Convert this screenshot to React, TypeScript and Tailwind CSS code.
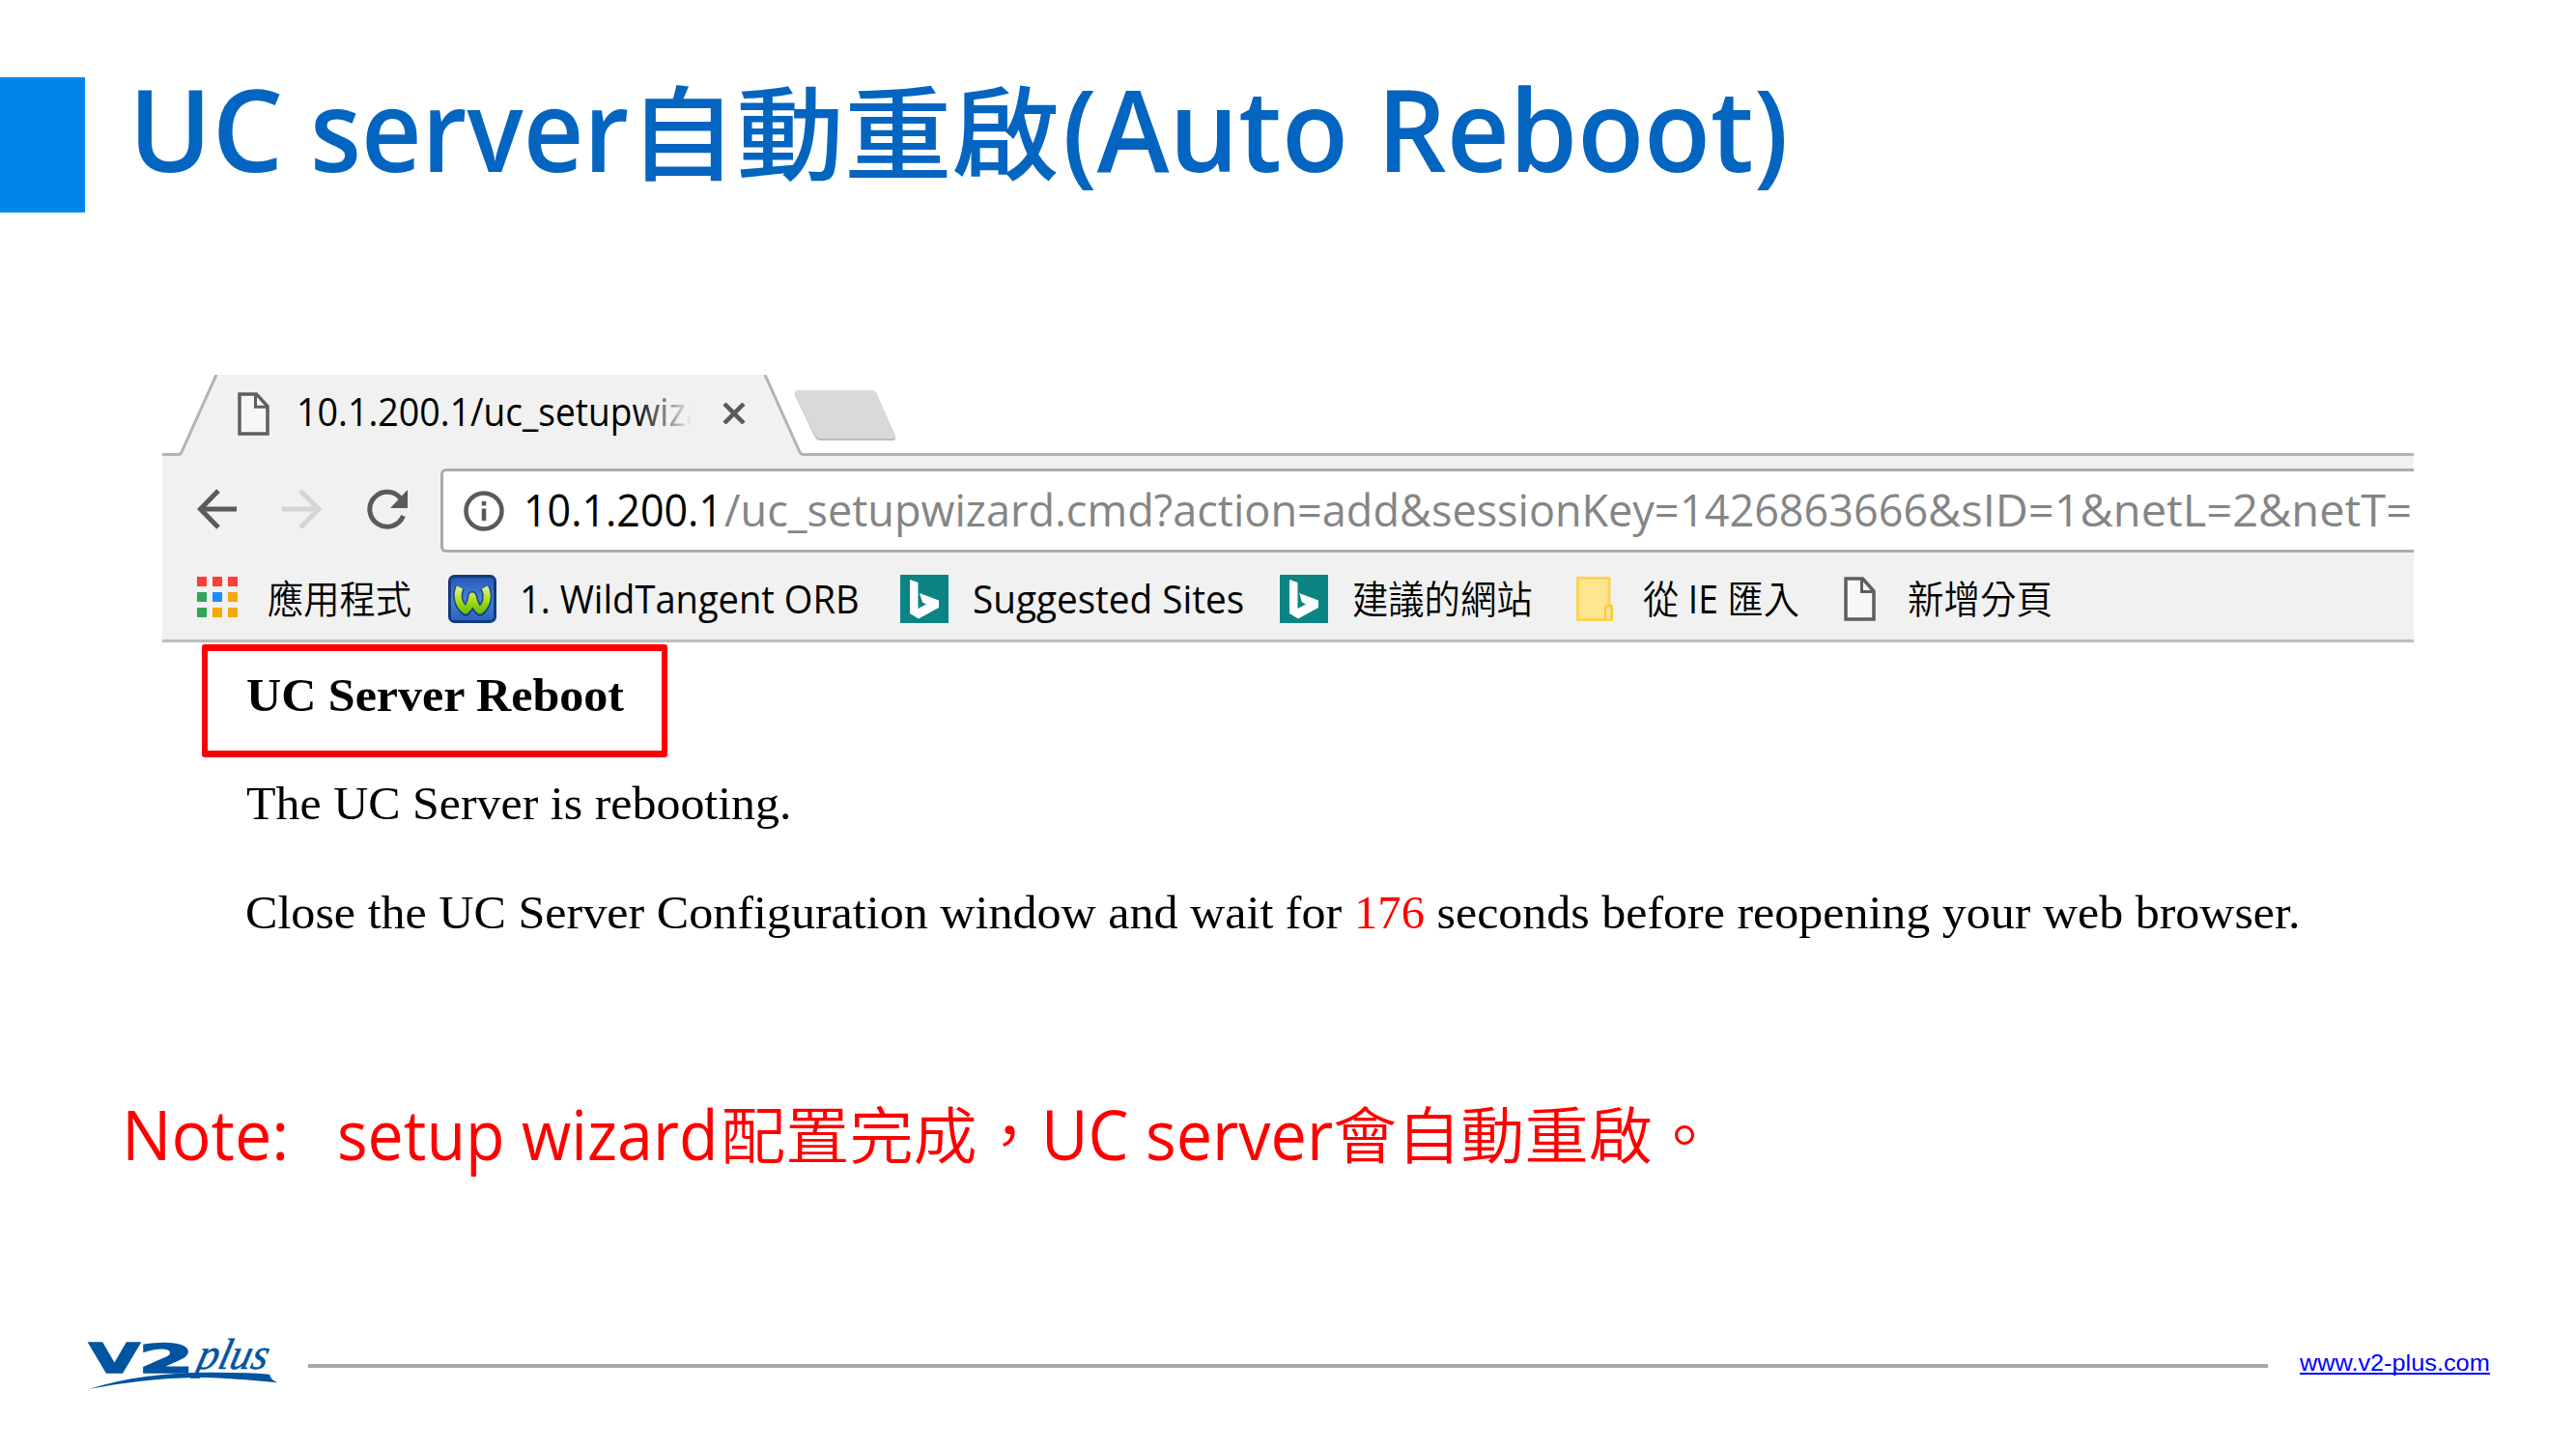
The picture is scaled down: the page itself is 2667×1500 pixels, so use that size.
import { useLayoutEffect, useRef, type ReactNode } from "react";

/** Stretches a single line of text horizontally so it fills its box. */
function Fit({ className, children }: { className: string; children: ReactNode }) {
  const box = useRef<HTMLSpanElement>(null);
  const text = useRef<HTMLSpanElement>(null);
  useLayoutEffect(() => {
    if (!box.current || !text.current) return;
    const ratio = box.current.clientWidth / text.current.offsetWidth;
    text.current.style.transform = `scaleX(${ratio})`;
  }, []);
  return (
    <span ref={box} className={`block shrink-0 ${className}`}>
      <span ref={text} className="inline-block origin-left whitespace-pre">
        {children}
      </span>
    </span>
  );
}

const UI = "font-['Open_Sans','Noto_Sans_CJK_TC',sans-serif]";

function PageIcon({ className }: { className: string }) {
  return (
    <svg viewBox="0 0 33 46" preserveAspectRatio="none" fill="none" className={`block shrink-0 ${className}`}>
      <path d="M2 2H19.500L31 15V44H2Z" fill="#f7f7f7" stroke="#5f5f5f" strokeWidth="3.500" />
      <path d="M18.500 2V15.500H31" stroke="#5f5f5f" strokeWidth="3" />
    </svg>
  );
}

function BingIcon({ className }: { className: string }) {
  return (
    <svg viewBox="0 0 50 50" className={`block h-[50px] w-[50px] shrink-0 ${className}`}>
      <rect width="50" height="50" fill="#0c8484" />
      <path d="M10 5L18.500 8V35L27 30.500L23 28.500L20 19L40 26.500V34L19 45.500L10 40Z" fill="#fff" />
    </svg>
  );
}

function AppsIcon() {
  const colors = [
    "bg-[#fb3f38]", "bg-[#fb3f38]", "bg-[#fb3f38]",
    "bg-[#34a45c]", "bg-[#1a8cff]", "bg-[#f8a806]",
    "bg-[#34a45c]", "bg-[#f8a806]", "bg-[#f8a806]",
  ];
  return (
    <div className="ml-9 mt-[2px] grid h-[42px] w-[42px] shrink-0 grid-cols-3 gap-[6px]">
      {colors.map((c, i) => (
        <div key={i} className={c} />
      ))}
    </div>
  );
}

function OrbIcon() {
  return (
    <svg viewBox="0 0 50 50" className="ml-[38px] block h-[50px] w-[50px] shrink-0">
      <defs>
        <linearGradient id="orb" x1="0" y1="0" x2="0" y2="1">
          <stop offset="0" stopColor="#2456b0" />
          <stop offset="0.5" stopColor="#4383dc" />
          <stop offset="1" stopColor="#2a62bd" />
        </linearGradient>
        <linearGradient id="leaf" x1="0" y1="0" x2="0" y2="1">
          <stop offset="0" stopColor="#d9ee9a" />
          <stop offset="0.5" stopColor="#b4e020" />
          <stop offset="1" stopColor="#74c400" />
        </linearGradient>
      </defs>
      <rect x="1.500" y="1.500" width="47" height="47" rx="5" fill="url(#orb)" stroke="#14397f" strokeWidth="3" />
      <path
        d="M12 13C8 22 11 32 18 38C22 34 24 29 25 22C27 30 29 35 33 38C41 31 42 21 38 13"
        fill="none"
        stroke="#1c4386"
        strokeWidth="10"
        strokeLinejoin="round"
      />
      <path
        d="M12 13C8 22 11 32 18 37C22 34 24 29 25 22C27 30 29 35 33 37C41 31 42 21 38 13"
        fill="none"
        stroke="url(#leaf)"
        strokeWidth="7"
        strokeLinejoin="round"
      />
    </svg>
  );
}

function FolderIcon() {
  return (
    <svg viewBox="0 0 38 46" className="ml-[45px] mt-[2px] block h-[46px] w-[38px] shrink-0">
      <path d="M1.500 1.500H34V30H36.500V44.500H1.500Z" fill="#ffe58f" stroke="#fbd54f" strokeWidth="3" />
      <path d="M30 44V34Q30 30 33 30Q36.500 30 36.500 34V44" fill="#ffe58f" stroke="#f3c93c" strokeWidth="2" />
    </svg>
  );
}

function TabStrip() {
  return (
    <div className="relative flex h-[84px] items-start">
      <svg viewBox="0 0 2331 84" className="absolute inset-0 h-[84px] w-[2331px]">
        <path d="M0 84V82H19L56 0H624L661 82H2331V84Z" fill="#f1f1f1" />
        <path d="M0 82.500H17Q19 82.500 20 80L56 0M624 0L660 80Q661 82.500 664 82.500H2331" fill="none" stroke="#b3b3b3" strokeWidth="3" />
        <path d="M658 17H734Q738 17 739.500 20L759 64Q760 68 756 68H682Q678 68 676 65L655 21Q654 17 658 17Z" fill="#bdbdbd" />
        <path d="M658 16H734Q738 16 739.500 19L758.500 62Q760 66 756 66H682Q678 66 676 63L655 20Q654 16 658 16Z" fill="#d9d9d9" />
      </svg>
      <PageIcon className="relative ml-[78px] mt-[18px] h-[45px] w-[33px]" />
      <div className={`relative ml-[28px] mt-[13px] flex w-[413px] text-[39.500px] leading-[50px] text-black ${UI}`}>
        <Fit className="w-[180px]">10.1.200.1</Fit>
        <Fit className="w-[243px]">/uc_setupwiza</Fit>
        <div className="absolute -right-[12px] top-0 h-[50px] w-[76px] bg-linear-to-r from-[#f1f1f1]/0 to-[#f1f1f1] to-80%" />
      </div>
      <svg viewBox="0 0 24 22" className="relative ml-[28px] mt-[29px] block h-[22px] w-[24px]">
        <path d="M2 1L22 21M22 1L2 21" stroke="#5a5a5a" strokeWidth="4.500" />
      </svg>
    </div>
  );
}

function Toolbar() {
  return (
    <div className="flex h-[112px] items-start">
      <svg viewBox="0 0 42 42" className="ml-9 mt-[34px] block h-[42px] w-[42px] shrink-0" fill="none" stroke="#5a5a5a" strokeWidth="5">
        <path d="M41 21H4M22 2L3.500 21L22 40" />
      </svg>
      <svg viewBox="0 0 42 42" className="ml-[46px] mt-[34px] block h-[42px] w-[42px] shrink-0" fill="none" stroke="#d5d5d5" strokeWidth="5">
        <path d="M0 21H37M19 2L38 21L19 40" />
      </svg>
      <svg viewBox="0 0 44 44" className="ml-[45px] mt-[34px] block h-[44px] w-[44px] shrink-0">
        <path d="M35.500 9.500A18 18 0 1 0 38.500 28" fill="none" stroke="#5a5a5a" strokeWidth="5" />
        <path d="M43 1V20H25Z" fill="#5a5a5a" />
      </svg>
      <div className={`ml-[33px] mt-[13px] flex h-[87px] w-[2043px] items-start rounded-l-[6px] border-y-[3px] border-l-[3px] border-[#ababab] bg-white text-[45.500px] leading-[60px] ${UI}`}>
        <svg viewBox="0 0 42 42" className="ml-[21px] mt-[20px] block h-[42px] w-[42px] shrink-0" fill="none" stroke="#5a5a5a" strokeWidth="4.500">
          <circle cx="21" cy="21" r="18.500" />
          <path d="M21 18.500V31M21 11V15.500" />
        </svg>
        <Fit className="ml-[20px] mt-[9px] w-[206px] text-black">10.1.200.1</Fit>
        <Fit className="ml-[2px] mt-[9px] w-[732px] text-[#858585]">/uc_setupwizard.cmd?action=add&amp;</Fit>
        <Fit className="mt-[9px] w-[257px] text-[#858585]">sessionKey=</Fit>
        <Fit className="mt-[9px] w-[257px] text-[#858585]">1426863666</Fit>
        <Fit className="mt-[9px] w-[501px] text-[#858585]">&amp;sID=1&amp;netL=2&amp;netT=</Fit>
      </div>
    </div>
  );
}

function BookmarksBar() {
  return (
    <div className={`flex h-[81px] items-start border-b-[3px] border-[#bcbcbc] pt-[11px] text-[39.500px] leading-[50px] text-black ${UI}`}>
      <AppsIcon />
      <Fit className="ml-[31px] w-[149px] font-[350]">應用程式</Fit>
      <OrbIcon />
      <Fit className="ml-[24px] w-[352px]">1. WildTangent ORB</Fit>
      <BingIcon className="ml-[42px]" />
      <Fit className="ml-[25px] w-[281px]">Suggested Sites</Fit>
      <BingIcon className="ml-[37px]" />
      <Fit className="ml-[25px] w-[187px] font-[350]">建議的網站</Fit>
      <FolderIcon />
      <Fit className="ml-[31px] w-[162px] font-[350]">
        從 <span className="font-normal">IE</span> 匯入
      </Fit>
      <PageIcon className="ml-[46px] mt-[2px] h-[46px] w-[33px]" />
      <Fit className="ml-[33px] w-[150px] font-[350]">新增分頁</Fit>
    </div>
  );
}

function PageBody() {
  return (
    <div className="flex flex-col pl-[41px] font-['Liberation_Serif',serif] text-[48px] leading-[60px] text-black">
      <div className="mt-[2px] h-[117px] w-[482px] rounded-[3px] border-x-[6px] border-y-[7px] border-[#ff0000] pl-[40px] pt-[16px]">
        <Fit className="w-[391px] font-bold">UC Server Reboot</Fit>
      </div>
      <Fit className="ml-[46px] mt-[18px] w-[565px]">The UC Server is rebooting.</Fit>
      <div className="ml-[45px] mt-[53px] flex">
        <Fit className="w-[1148px]">{"Close the UC Server Configuration window and wait for "}</Fit>
        <Fit className="w-[73px] text-[#ff0000]">176</Fit>
        <Fit className="w-[906px]">{" seconds before reopening your web browser."}</Fit>
      </div>
    </div>
  );
}

function Logo() {
  return (
    <svg viewBox="0 0 300 80" className="block h-[80px] w-[300px] shrink-0" fill="#0054a0">
      <text x="12" y="51" fontFamily="DejaVu Sans" fontWeight="700" fontSize="42" textLength="53" lengthAdjust="spacingAndGlyphs" stroke="#0054a0" strokeWidth="1.500">
        V
      </text>
      <text x="63" y="51" fontFamily="DejaVu Sans" fontWeight="700" fontSize="41" textLength="58" lengthAdjust="spacingAndGlyphs" stroke="#0054a0" strokeWidth="1.500">
        2
      </text>
      <text transform="translate(122 47) skewX(-14)" fontFamily="Liberation Serif" fontStyle="italic" fontSize="45" textLength="73" lengthAdjust="spacingAndGlyphs" stroke="#0054a0" strokeWidth="0.500">
        plus
      </text>
      <path d="M12.500 67.800C50 56 90 51 135 50.700Q170 50.500 199 52.700C200 57 203 59.500 207.500 61.300C180 59 160 56.500 125 56C80 56.500 45 62 12.500 67.800Z" />
    </svg>
  );
}

export default function App() {
  return (
    <div className="flex h-[1500px] w-[2667px] flex-col overflow-hidden bg-white">
      <header className="mt-[80px] flex h-[140px] items-start">
        <div className="h-[140px] w-[88px] bg-[#0086ea]" />
        <h1 className={`-mt-[17px] ml-[45px] flex text-[118px] font-semibold leading-[140px] text-[#0465c1] ${UI}`}>
          <Fit className="w-[160px]">UC</Fit>
          <Fit className="ml-[28px] w-[330px]">server</Fit>
          <Fit className="mt-[4px] w-[446px] text-[106px] font-medium">自動重啟</Fit>
          <Fit className="ml-[3px] w-[752px]">(Auto Reboot)</Fit>
        </h1>
      </header>

      <section className="ml-[168px] mt-[168px] flex h-[640px] w-[2331px] flex-col">
        <TabStrip />
        <div className="bg-[#f1f1f1]">
          <Toolbar />
          <BookmarksBar />
        </div>
        <PageBody />
      </section>

      <p className={`ml-[126px] mt-[106px] flex h-[88px] text-[71.500px] leading-[80px] text-[#ff0000] ${UI}`}>
        <Fit className="w-[173px]">Note:</Fit>
        <Fit className="ml-[50px] w-[395px]">setup wizard</Fit>
        <Fit className="ml-[3px] mt-[1px] w-[331px] text-[64px] font-[350]">配置完成，</Fit>
        <Fit className="w-[302px]">UC server</Fit>
        <Fit className="mt-[1px] w-[397px] text-[64px] font-[350]">會自動重啟。</Fit>
      </p>

      <footer className="ml-[80px] mt-[148px] flex h-[80px] items-start">
        <Logo />
        <div className="-ml-[61px] mt-[42px] h-[4px] w-[2029px] bg-[#a5a9a8]" />
        <a className="ml-[33px] mt-[32px] block h-[21px] border-b-2 border-[#0000ff] font-['Liberation_Sans',sans-serif] text-[24px] leading-[26px] text-[#0000ff]">
          <Fit className="-mt-[4px] w-[197px]">www.v2-plus.com</Fit>
        </a>
      </footer>
    </div>
  );
}
